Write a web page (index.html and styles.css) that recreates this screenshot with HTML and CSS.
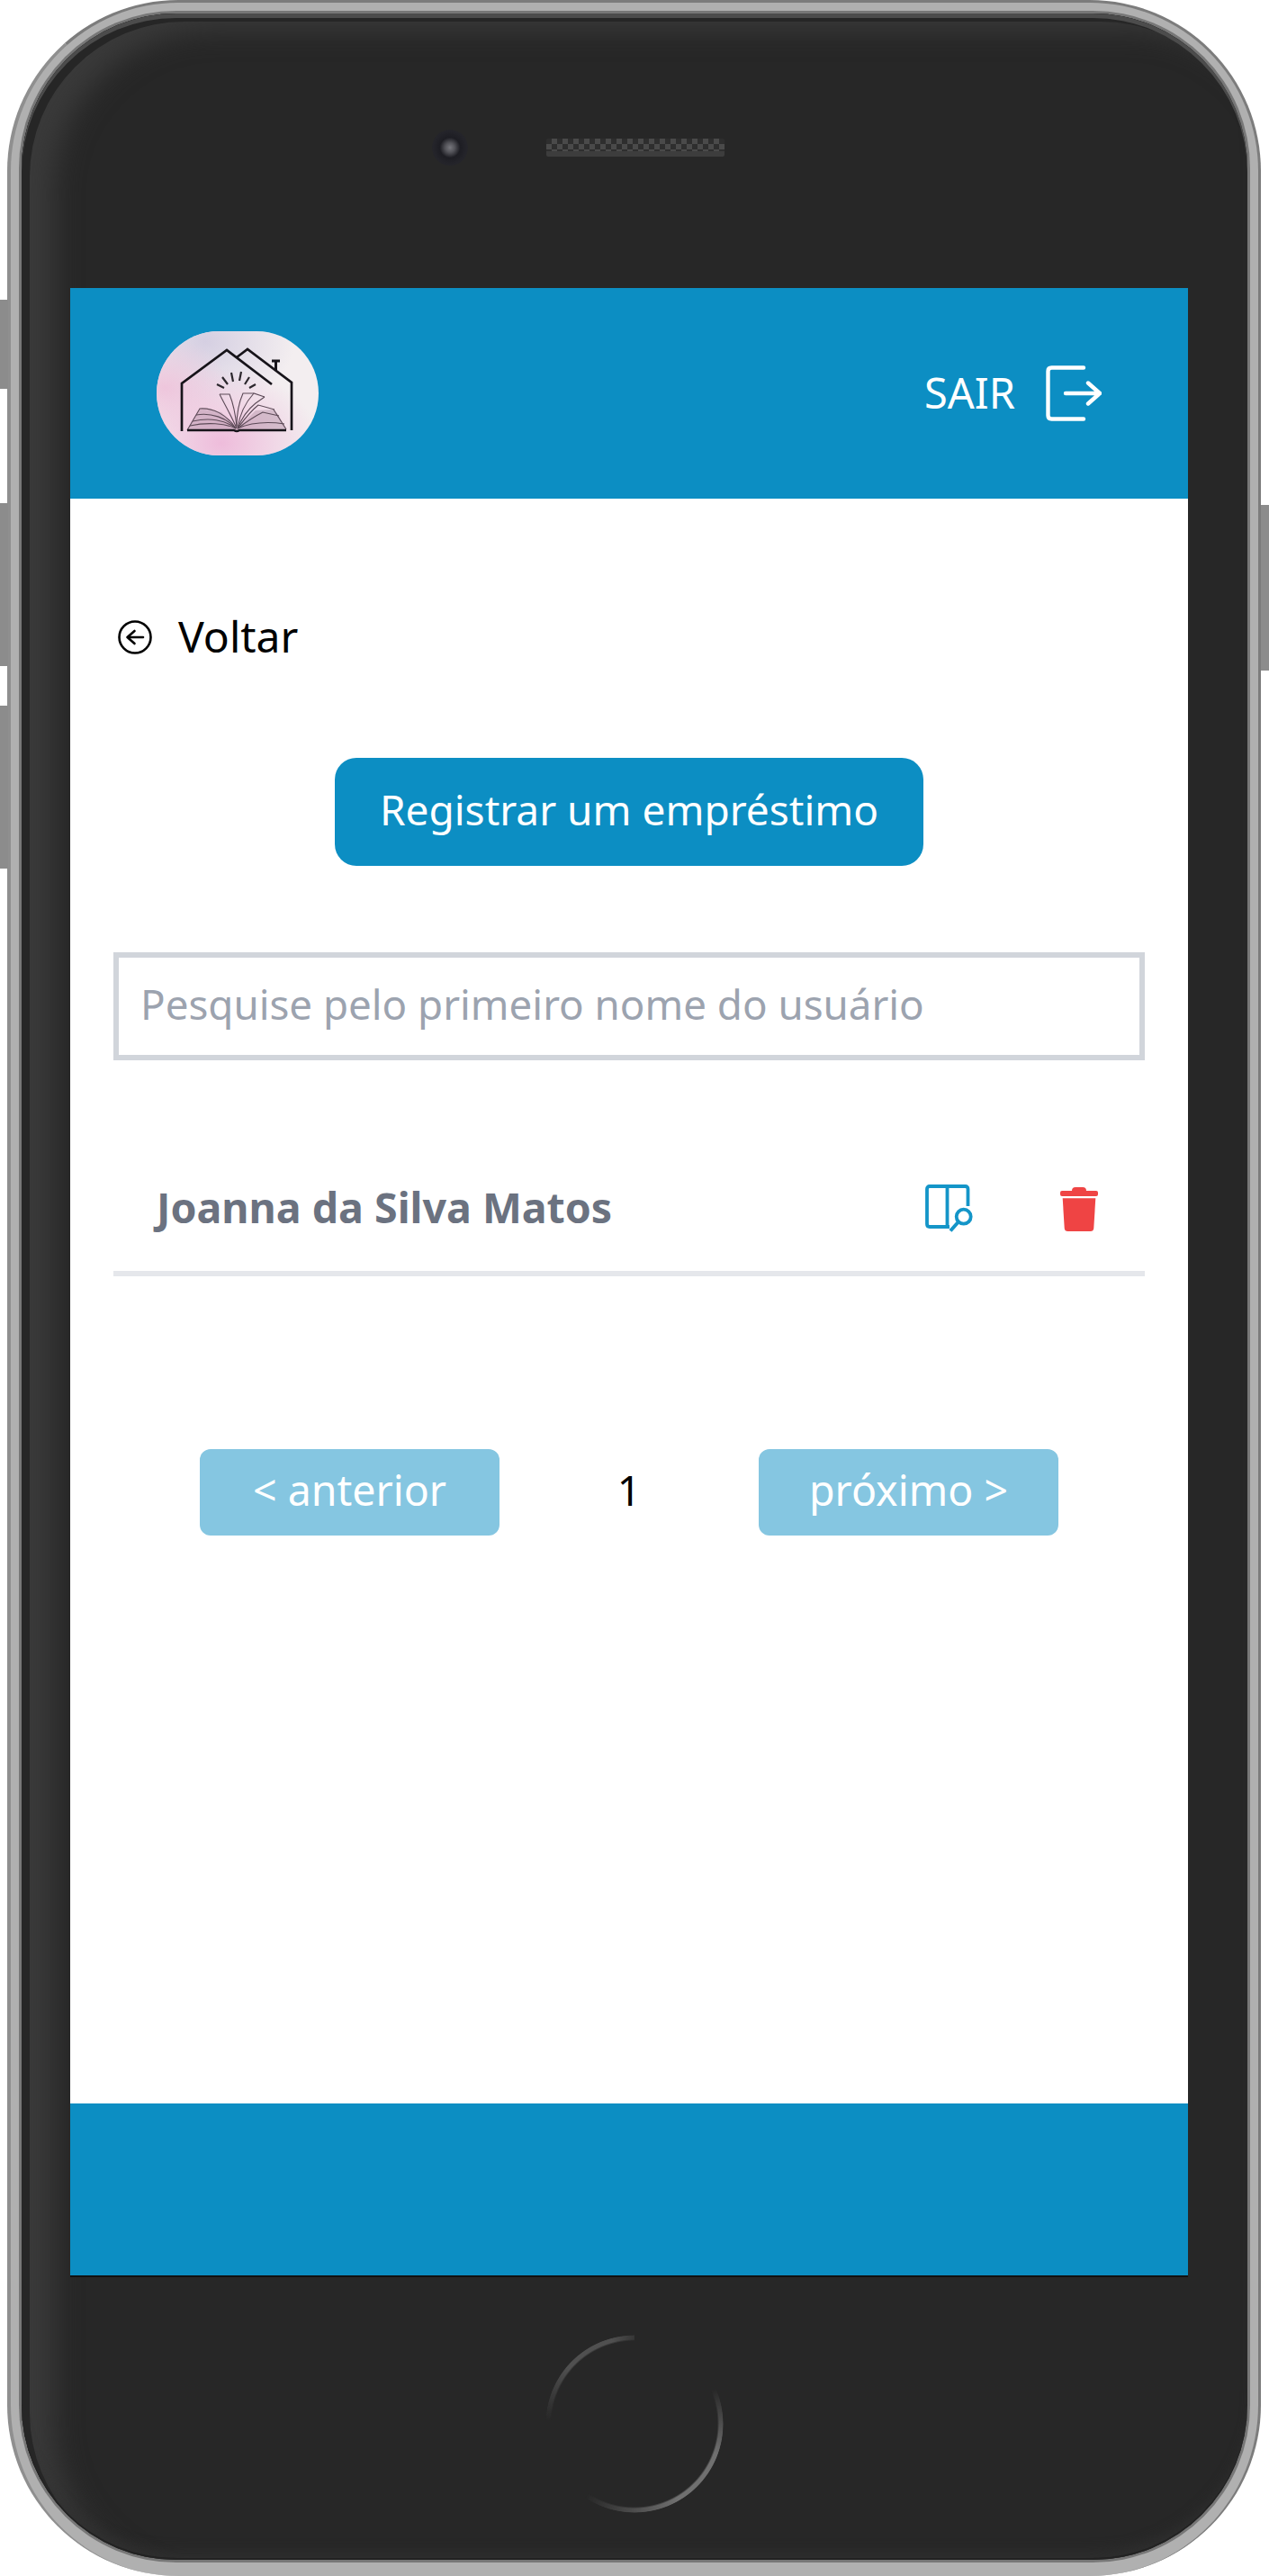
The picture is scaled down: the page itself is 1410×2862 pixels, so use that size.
FILE: index.html
```html
<!DOCTYPE html>
<html lang="pt-BR">
<head>
  <meta charset="UTF-8">
  <title>Empréstimos</title>
  <link rel="stylesheet" href="styles.css">
</head>
<body>

  <div class="phone">
    <!-- Side buttons -->
    <span class="side-btn side-mute"></span>
    <span class="side-btn side-up"></span>
    <span class="side-btn side-down"></span>
    <span class="side-btn side-power"></span>

    <div class="face">
      <div class="phone-top">
        <span class="camera"></span>
        <span class="speaker"></span>
      </div>

      <div class="screen">
        <header class="app-header">
          <div class="logo">
            <svg viewBox="0 0 180 138" width="180" height="138">
              <defs>
                <radialGradient id="wash1" cx="0.4" cy="0.9" r="0.6">
                  <stop offset="0" stop-color="#eebcdb"/>
                  <stop offset="1" stop-color="#eebcdb" stop-opacity="0"/>
                </radialGradient>
                <radialGradient id="wash2" cx="0.3" cy="0.08" r="0.55">
                  <stop offset="0" stop-color="#d5cfe2"/>
                  <stop offset="1" stop-color="#d5cfe2" stop-opacity="0"/>
                </radialGradient>
                <radialGradient id="wash3" cx="0.05" cy="0.45" r="0.4">
                  <stop offset="0" stop-color="#eec6dc"/>
                  <stop offset="1" stop-color="#eec6dc" stop-opacity="0"/>
                </radialGradient>
              </defs>
              <rect width="180" height="138" fill="#f3eef0"/>
              <rect width="180" height="138" fill="url(#wash2)"/>
              <rect width="180" height="138" fill="url(#wash3)"/>
              <rect width="180" height="138" fill="url(#wash1)"/>
              <!-- house -->
              <g fill="none" stroke="#17141a" stroke-width="2.7">
                <path d="M28 111V58L78 21 128 59"/>
                <path d="M89 29 101 20 150 57V110"/>
                <path d="M132.5 44V34M128 33H137" stroke-width="3"/>
              </g>
              <!-- rays -->
              <g fill="none" stroke="#2b272d" stroke-width="2.2">
                <path d="M67 59 75 63M73 51 79 59M83 46 85 56M94 45 92 55M103 51 98 59M110 59 103 63"/>
              </g>
              <!-- book -->
              <path d="M34 110 48 86 72 90 86 106 92 106 110 88 130 87 136 94 144 109Z" fill="#a98ba0" opacity="0.4"/>
              <g fill="none" stroke="#5c4a57" stroke-width="1.1">
                <path d="M34 110 48 86C62 85 78 92 88 108"/>
                <path d="M40 100C58 96 76 98 88 108"/>
                <path d="M44 93C60 90 78 96 88 108"/>
                <path d="M37 105C56 101 76 102 88 108"/>
                <path d="M70 70C76 82 84 96 89 108"/>
                <path d="M70 70H81C85 80 88 96 89 106"/>
                <path d="M108 69 96 69C91 80 89 96 89 106"/>
                <path d="M120 73 108 69C98 80 92 94 90 108"/>
                <path d="M120 73 110 80C100 88 94 98 90 108"/>
                <path d="M131 87 113 82C103 90 96 100 90 108"/>
                <path d="M136 94 118 90C106 96 98 102 90 108"/>
                <path d="M144 109 130 87"/>
                <path d="M142 103C122 100 104 102 90 108"/>
              </g>
              <path d="M34 110H86Q89 112 92 110H144" fill="none" stroke="#17141a" stroke-width="2.4"/>
            </svg>
          </div>
          <a class="logout">
            <span>SAIR</span>
            <svg viewBox="0 0 62 62" width="62" height="62" fill="none" stroke="#fff" stroke-width="4.4" stroke-linecap="round" stroke-linejoin="round">
              <path d="M42 2.5H6.5Q2.5 2.5 2.5 6.5V55.5Q2.5 59.5 6.5 59.5H42"/>
              <path d="M22 31H60M47 19.5 60 31 47 42.5"/>
            </svg>
          </a>
        </header>

        <main class="content">
          <a class="back-link">
            <svg viewBox="0 0 38 38" width="38" height="38" fill="none" stroke="#000" stroke-width="2.6" stroke-linecap="round" stroke-linejoin="round">
              <circle cx="19" cy="19" r="17.5"/>
              <path d="M28 19H10.5M18.5 12 10.5 19 18.5 26"/>
            </svg>
            <span>Voltar</span>
          </a>

          <div class="action">
            <button class="btn-primary">Registrar um empréstimo</button>
          </div>

          <input class="search" type="text" placeholder="Pesquise pelo primeiro nome do usuário">

          <div class="user-row">
            <span class="user-name">Joanna da Silva Matos</span>
            <div class="user-actions">
              <svg viewBox="0 0 54 54" width="54" height="54" fill="none" stroke="#1495c8" stroke-width="3.8">
                <path d="M47.5 24V5Q47.5 2 44.5 2H5Q2 2 2 5V44Q2 47 5 47H27M24.5 2V47"/>
                <circle cx="42.7" cy="35.7" r="8"/>
                <path d="M36.5 42 28 51.5" stroke-width="4"/>
              </svg>
              <svg viewBox="0 0 42 49" width="42" height="49" fill="#ef4444">
                <path d="M13 4Q13 0 17 0H25Q29 0 29 4H40Q42 4 42 6V8Q42 10 40 10H2Q0 10 0 8V6Q0 4 2 4Z"/>
                <path d="M2.7 12.3H39.3L37.3 45.5Q37 49 33.5 49H8.5Q5 49 4.7 45.5Z"/>
              </svg>
            </div>
          </div>

          <nav class="pagination">
            <button class="page-btn">&lt; anterior</button>
            <span class="page-num">1</span>
            <button class="page-btn">próximo &gt;</button>
          </nav>
        </main>

        <footer class="app-footer"></footer>
      </div>

      <div class="phone-bottom">
        <span class="home-btn"></span>
      </div>
    </div>
  </div>

</body>
</html>
```

FILE: styles.css
```css
* {
  box-sizing: border-box;
}
body {
  margin: 0;
  background: #fff;
  font-family: "Noto Sans", Arial, sans-serif;
}

/* Phone body */
.phone {
  position: relative;
  width: 1393px;
  height: 2862px;
  margin-left: 8px;
  padding: 12px 12px 18px 12px;
  background: #b0b0b0;
  border: 3px solid #7c7c7c;
  border-left: 4px solid #8f8f8f;
  border-bottom: none;
  border-radius: 190px;
}
.side-btn {
  position: absolute;
  width: 9px;
  background: #8c8c8c;
}
.side-mute {
  left: -12px;
  top: 330px;
  height: 99px;
}
.side-up {
  left: -12px;
  top: 556px;
  height: 181px;
}
.side-down {
  left: -12px;
  top: 781px;
  height: 181px;
}
.side-power {
  right: -12px;
  top: 558px;
  height: 184px;
}
.face {
  display: flex;
  flex-direction: column;
  height: 100%;
  padding: 0 66px 0 54px;
  background: #272727;
  border-radius: 172px;
  box-shadow:
    0 0 0 3px #777,
    inset 0 5px 0 #4c4c4c,
    inset 0 -2px 0 #222,
    inset 9px 9px 0 #262626,
    inset 0 -16px 14px -8px #2f2f2f,
    inset 42px 24px 30px -6px #3a3a3a;
}

.phone-top {
  display: flex;
  align-items: center;
  flex: 0 0 305px;
  margin-left: -54px;
  padding: 0 0 8px 456px;
}
.camera {
  width: 40px;
  height: 40px;
  border-radius: 50%;
  background: radial-gradient(circle, #77777d 0, #55555b 18%, #1d1d23 40%, #24242a 65%, #272727 100%);
}
.speaker {
  width: 198px;
  height: 20px;
  margin-left: 87px;
  border-radius: 2px;
  background:
    repeating-conic-gradient(#4a4a4a 0 25%, #2e2e2e 0 50%) 0 0 / 12px 12px;
  border-bottom: 6px solid #3d3d3d;
}
.phone-bottom {
  flex: 1;
  display: flex;
  justify-content: center;
  padding: 66px 0 0 12px;
}
.home-btn {
  width: 198px;
  height: 198px;
  border-radius: 50%;
  background: conic-gradient(
    transparent 9deg,
    transparent 66deg,
    #707070 110deg,
    #707070 150deg,
    transparent 214deg,
    transparent 272deg,
    #505050 310deg,
    #505050 345deg,
    transparent 369deg
  );
  -webkit-mask: radial-gradient(closest-side, transparent 93%, #000 95%, #000 99%, transparent 100%);
  mask: radial-gradient(closest-side, transparent 93%, #000 95%, #000 99%, transparent 100%);
  filter: blur(0.6px);
}

/* App screen */
.screen {
  display: flex;
  flex-direction: column;
  flex: 0 0 2208px;
  background: #fff;
}
.app-header {
  display: flex;
  justify-content: space-between;
  align-items: center;
  flex: 0 0 234px;
  padding: 0 96px;
  background: #0c8ec3;
}
.logo {
  width: 180px;
  height: 138px;
  border-radius: 69px;
  overflow: hidden;
}
.logo svg {
  display: block;
}
.logout {
  display: flex;
  align-items: center;
  gap: 34px;
  color: #fff;
  font-size: 47px;
}
.logout span {
  padding-bottom: 2px;
}
.logout svg {
  display: block;
}
.content {
  flex: 1;
  display: flex;
  flex-direction: column;
  padding: 0 48px;
}
.back-link {
  display: flex;
  align-items: center;
  gap: 29px;
  height: 60px;
  margin: 124px 0 0 5px;
  color: #000;
  font-size: 48px;
}
.back-link span {
  padding-bottom: 3px;
}
.back-link svg {
  flex: none;
}
.action {
  display: flex;
  justify-content: center;
  margin-top: 104px;
}
.btn-primary {
  width: 654px;
  height: 120px;
  padding: 0 0 6px;
  background: #0c8ec3;
  color: #fff;
  border: none;
  border-radius: 24px;
  font-family: inherit;
  font-size: 46px;
}
.search {
  width: 100%;
  height: 120px;
  margin-top: 96px;
  padding: 0 24px 6px;
  border: 6px solid #d1d5db;
  background: #fff;
  font-family: inherit;
  font-size: 45.7px;
  color: #374151;
  outline: none;
}
.search::placeholder {
  color: #9ca3af;
  opacity: 1;
}
.user-row {
  display: flex;
  justify-content: space-between;
  align-items: center;
  height: 140px;
  margin-top: 100px;
  padding: 0 52px 4px 48px;
  border-bottom: 6px solid #e5e7eb;
}
.user-name {
  padding-bottom: 5px;
  color: #6b7280;
  font-size: 46.5px;
  font-weight: 700;
}
.user-actions {
  display: flex;
  align-items: center;
  gap: 96px;
}
.user-actions svg {
  display: block;
}
.pagination {
  display: flex;
  justify-content: space-between;
  align-items: center;
  margin-top: 192px;
  padding: 0 96px;
}
.page-btn {
  width: 333px;
  height: 96px;
  padding: 0 0 6px;
  background: #85c6e1;
  color: #fff;
  border: none;
  border-radius: 12px;
  font-family: inherit;
  font-size: 46.5px;
}
.page-num {
  padding-bottom: 6px;
  font-size: 46px;
  color: #000;
}
.app-footer {
  flex: 0 0 191px;
  background: #0c8ec3;
  box-shadow: 0 2px 0 #111;
}
```
